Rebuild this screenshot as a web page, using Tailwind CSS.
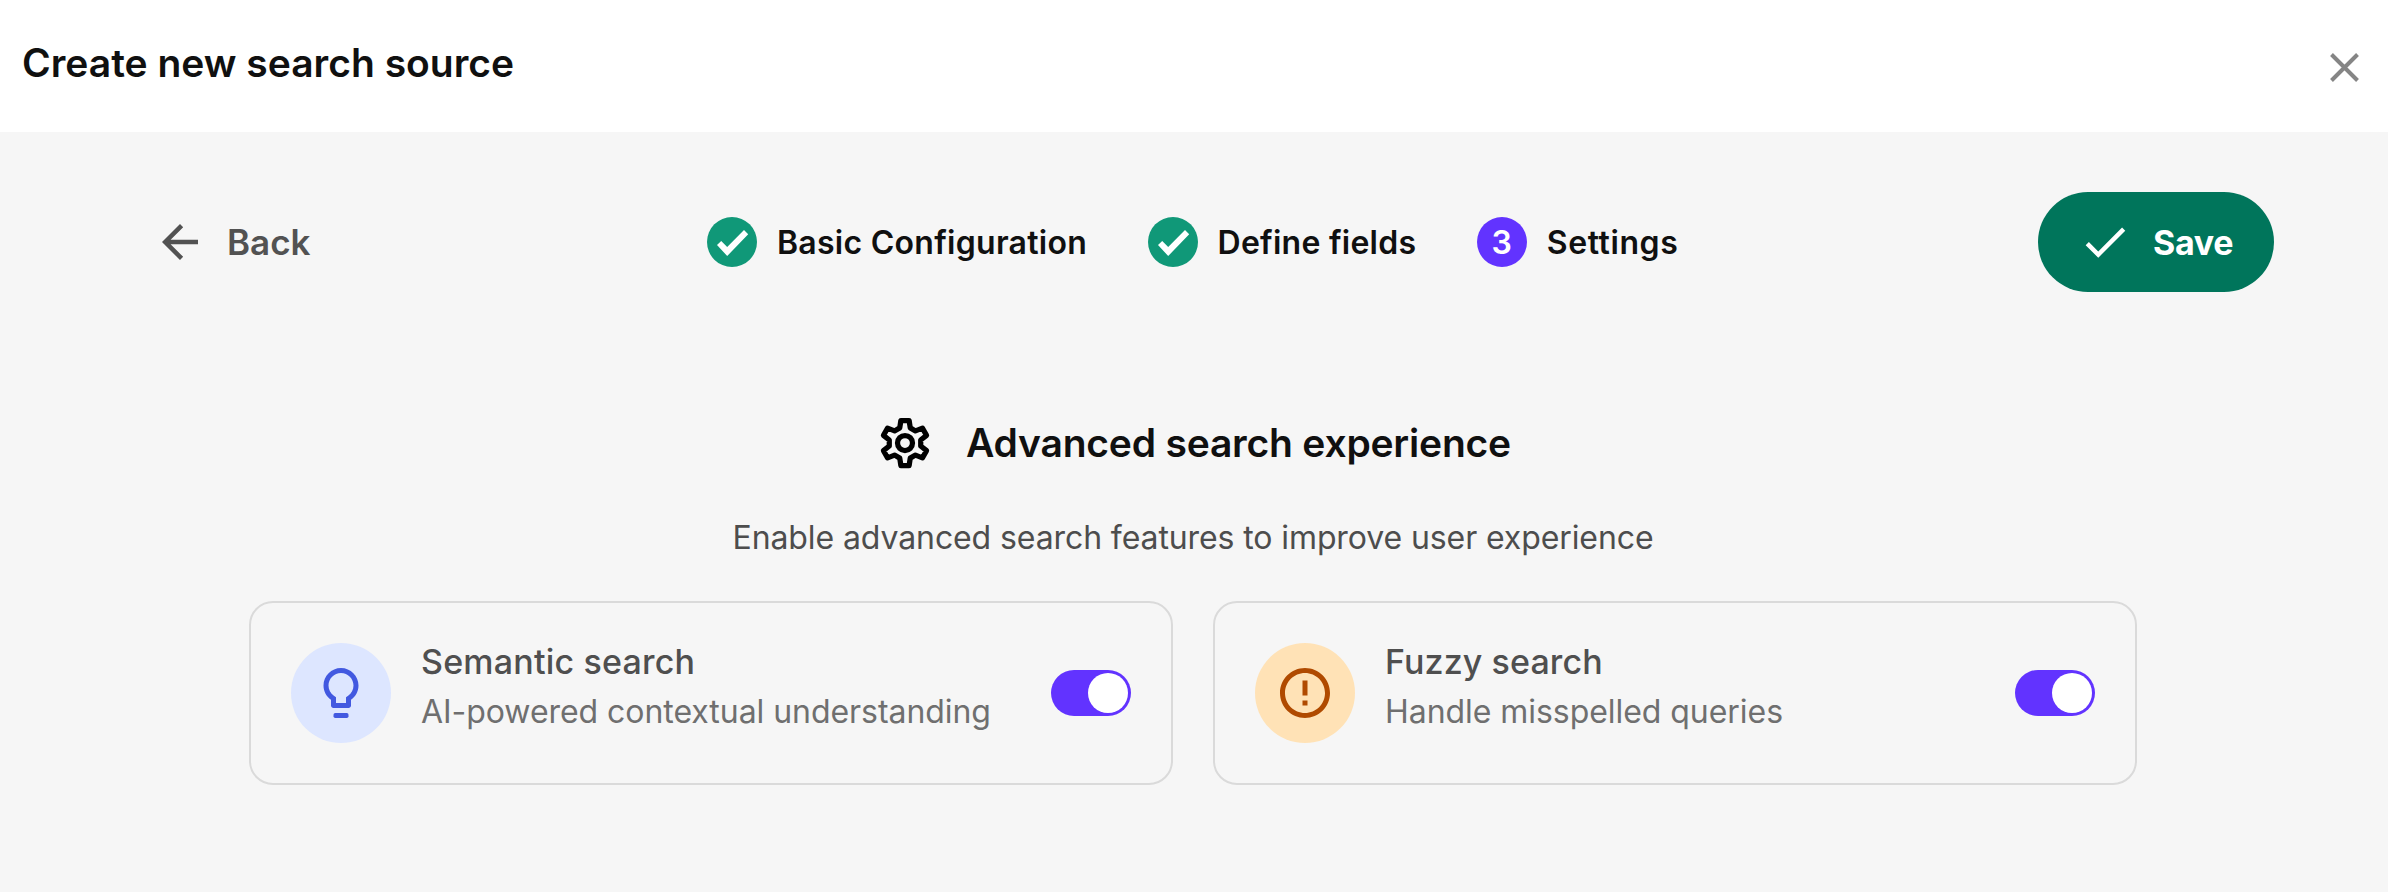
<!DOCTYPE html>
<html lang="en">
<head>
    <meta charset="UTF-8"/>
    <meta name="viewport" content="width=device-width, initial-scale=1.0"/>
    <title>Create new search source</title>
    <script src="https://cdn.jsdelivr.net/npm/@tailwindcss/browser@4"></script>
</head>
<body class="bg-[#f6f6f6] text-[#101010] font-['Inter',sans-serif] min-h-screen">
<header class="bg-white h-[132px] flex items-start justify-between pl-[22px] pr-[29px]">
    <h1 class="pt-[33px] text-[39px] leading-[60px] font-semibold whitespace-nowrap">Create new search source</h1>
    <button type="button" aria-label="Close" class="mt-[53px]">
        <svg class="w-[29px] h-[29px] text-[#858585]" viewBox="0 0 29 29" fill="none" stroke="currentColor" stroke-width="4">
            <path d="M1.5 1.5l26 26M27.5 1.5l-26 26"/>
        </svg>
    </button>
</header>

<main class="pt-[60px]">
    <!-- Navigation and steps -->
    <div class="grid grid-cols-[554px_1fr_236px] items-center pl-[153px] pr-[114px]">
        <button type="button" class="flex items-center gap-[20px] text-[#525252] text-[35px] leading-[50px] font-semibold">
            <svg class="w-[54px] h-[54px]" viewBox="0 0 24 24" fill="currentColor">
                <path d="M20 11H7.83l5.59-5.59L12 4l-8 8 8 8 1.41-1.41L7.83 13H20v-2z"/>
            </svg>
            Back
        </button>
        <ol class="flex items-center gap-[60.5px] text-[32px] leading-[50px] font-semibold whitespace-nowrap">
            <li class="flex items-center gap-[20px]">
                <svg class="w-[50px] h-[50px]" viewBox="0 0 50 50">
                    <circle cx="25" cy="25" r="25" fill="#109878"/>
                    <path d="M10 28l4.2-4 6 6L37 13l4.2 4.2L20.2 39z" fill="#fff"/>
                </svg>
                <span class="pt-[2px] leading-[50px] tracking-[0.27px]">Basic Configuration</span>
            </li>
            <li class="flex items-center gap-[20px]">
                <svg class="w-[50px] h-[50px]" viewBox="0 0 50 50">
                    <circle cx="25" cy="25" r="25" fill="#109878"/>
                    <path d="M10 28l4.2-4 6 6L37 13l4.2 4.2L20.2 39z" fill="#fff"/>
                </svg>
                <span class="pt-[2px] tracking-[0.25px]">Define fields</span>
            </li>
            <li class="flex items-center gap-[20px]">
                <span class="w-[50px] h-[50px] rounded-full bg-[#6233ff] text-white text-center leading-[52px]">3</span>
                <span class="pt-[2px] tracking-[0.6px]">Settings</span>
            </li>
        </ol>
        <button type="button" class="h-[100px] rounded-full bg-[#00755b] text-white flex items-center gap-[21px] pl-[40px] text-[34px] font-bold tracking-[-0.3px]">
            <svg class="w-[54px] h-[54px]" viewBox="0 0 24 24" fill="currentColor">
                <path d="M9 16.17L4.83 12l-1.42 1.41L9 19 21 7l-1.41-1.41z"/>
            </svg>
            Save
        </button>
    </div>

    <section class="mt-[121px] ml-[249px] w-[1888px]">
        <div class="flex items-center justify-center gap-[31px]">
            <svg class="w-[60px] h-[60px] text-black" viewBox="-12 -12 24 24" fill="none" stroke="currentColor" stroke-width="2.1" stroke-linejoin="round">
                <path d="M-1.65-9L1.65-9 2.1-6.05 4.19-4.84 6.97-5.93 8.62-3.07 6.29-1.21 6.29 1.21 8.62 3.07 6.97 5.93 4.19 4.84 2.1 6.05 1.65 9-1.65 9-2.1 6.05-4.19 4.84-6.97 5.93-8.62 3.07-6.29 1.21-6.29-1.21-8.62-3.07-6.97-5.93-4.19-4.84-2.1-6.05z"/>
                <circle r="3"/>
            </svg>
            <h2 class="text-[39px] leading-[60px] font-semibold tracking-[-0.2px] whitespace-nowrap">Advanced search experience</h2>
        </div>
        <p class="mt-[41px] text-center text-[32px] leading-[48px] tracking-[-0.1px] text-[#4d4d4d]">Enable advanced search features to improve user experience</p>

        <!-- Feature cards -->
        <div class="mt-[39px] grid grid-cols-2 gap-10">
            <div class="h-[184px] px-10 border-2 border-[#dadada] rounded-3xl flex items-center">
                <div class="w-[100px] h-[100px] shrink-0 rounded-full bg-[#dde6ff] flex items-center justify-center">
                    <svg class="w-[60px] h-[60px] text-[#4259e0]" viewBox="0 0 24 24" fill="currentColor">
                        <rect x="9" y="20" width="6" height="2" rx="0.7"/>
                        <path d="M12 2C8.14 2 5 5.14 5 9c0 2.38 1.19 4.47 3 5.74V17c0 .55.45 1 1 1h6c.55 0 1-.45 1-1v-2.26c1.81-1.27 3-3.36 3-5.74 0-3.86-3.14-7-7-7zm2.85 11.1l-.85.6V16h-4v-2.3l-.85-.6C7.8 12.16 7 10.63 7 9c0-2.76 2.24-5 5-5s5 2.24 5 5c0 1.63-.8 3.16-2.15 4.1z"/>
                    </svg>
                </div>
                <div class="ml-[30px] pb-[13px] flex-1 whitespace-nowrap">
                    <h3 class="text-[34px] leading-[50px] font-medium tracking-[0.2px] text-[#4f4f4f]">Semantic search</h3>
                    <p class="text-[32px] leading-[50px] tracking-[-0.05px] text-[#6f6f6f]">AI-powered contextual understanding</p>
                </div>
                <button type="button" role="switch" aria-checked="true" aria-label="Semantic search"
                        class="w-[80px] h-[46px] p-[3px] shrink-0 rounded-full bg-[#6233ff] flex justify-end">
                    <span class="w-10 h-10 rounded-full bg-white"></span>
                </button>
            </div>
            <div class="h-[184px] px-10 border-2 border-[#dadada] rounded-3xl flex items-center">
                <div class="w-[100px] h-[100px] shrink-0 rounded-full bg-[#ffe2b6] flex items-center justify-center">
                    <svg class="w-[60px] h-[60px] text-[#b04a00]" viewBox="0 0 24 24" fill="currentColor">
                        <path d="M11 15h2v2h-2zm0-8h2v6h-2zm.99-5C6.47 2 2 6.48 2 12s4.47 10 9.99 10C17.52 22 22 17.52 22 12S17.52 2 11.99 2zM12 20c-4.42 0-8-3.58-8-8s3.58-8 8-8 8 3.58 8 8-3.58 8-8 8z"/>
                    </svg>
                </div>
                <div class="ml-[30px] pb-[13px] flex-1 whitespace-nowrap">
                    <h3 class="text-[34px] leading-[50px] font-medium tracking-[0.1px] text-[#4f4f4f]">Fuzzy search</h3>
                    <p class="text-[32px] leading-[50px] tracking-[-0.05px] text-[#6f6f6f]">Handle misspelled queries</p>
                </div>
                <button type="button" role="switch" aria-checked="true" aria-label="Fuzzy search"
                        class="w-[80px] h-[46px] p-[3px] shrink-0 rounded-full bg-[#6233ff] flex justify-end">
                    <span class="w-10 h-10 rounded-full bg-white"></span>
                </button>
            </div>
        </div>
    </section>
</main>
</body>
</html>
